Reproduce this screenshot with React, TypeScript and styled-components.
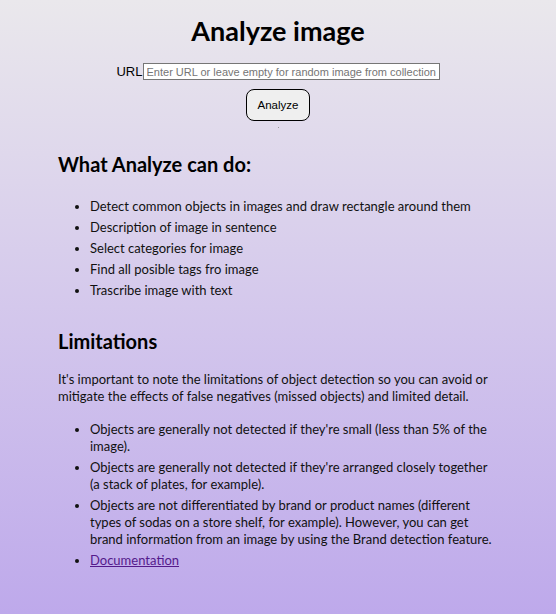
import React from "react";
import styled, { createGlobalStyle } from "styled-components";

const Global = createGlobalStyle`
  html, body { margin: 0; padding: 0; }
  body {
    min-height: 100vh;
    background: linear-gradient(180deg, #eae8ec 0%, #d4c8ec 50%, #bea9eb 100%);
    font-family: Lato, "Noto Sans", sans-serif;
    color: #111;
  }
`;

const Page = styled.main`
  width: 440px;
  margin: 0 auto;
  padding-top: 14px;
  padding-bottom: 20px;
`;

const Title = styled.h1`
  margin: 0;
  text-align: center;
  font-size: 27px;
  line-height: 34px;
  font-weight: 700;
  color: #000;
`;

const Form = styled.form`
  display: flex;
  flex-direction: column;
  align-items: center;
  margin-top: 15px;
`;

const UrlRow = styled.div`
  display: flex;
  align-items: center;
  font-family: "Liberation Sans", Arial, sans-serif;
  font-size: 13px;
  color: #000;
`;

const UrlInput = styled.input`
  box-sizing: border-box;
  width: 297px;
  height: 17px;
  margin: 0;
  padding: 0 3px;
  border: 1px solid #767676;
  background: #fff;
  font-family: "Liberation Sans", Arial, sans-serif;
  font-size: 11px;
  &::placeholder { color: #757575; }
`;

const Button = styled.button`
  margin-top: 9px;
  width: 64px;
  height: 32px;
  border: 1px solid #000;
  border-radius: 8px;
  background: #efefef;
  font-family: "Liberation Sans", Arial, sans-serif;
  font-size: 11.5px;
  color: #000;
`;

const Dot = styled.span`
  display: block;
  width: 1px;
  height: 1px;
  margin-top: 6px;
  background: #999;
`;

const Heading = styled.h2<{ $top: number }>`
  margin: ${(p) => p.$top}px 0 0;
  font-size: 20px;
  line-height: 26px;
  font-weight: 700;
  color: #000;
`;

const List = styled.ul<{ $top: number }>`
  margin: ${(p) => p.$top}px 0 0;
  padding-left: 32px;
  font-size: 13px;
  line-height: 17px;
`;

const Item = styled.li`
  margin-bottom: 4px;
`;

const Para = styled.p`
  margin: 17px 0 0;
  font-size: 13px;
  line-height: 17px;
`;

const Link = styled.a`
  color: #551a8b;
`;

export default function App() {
  return (
    <>
      <Global />
      <Page>
        <Title>Analyze image</Title>
        <Form onSubmit={(e) => e.preventDefault()}>
          <UrlRow>
            <span>URL</span>
            <UrlInput placeholder="Enter URL or leave empty for random image from collection" />
          </UrlRow>
          <Button type="submit">Analyze</Button>
          <Dot />
        </Form>
        <Heading $top={23}>What Analyze can do:</Heading>
        <List $top={21}>
          <Item>Detect common objects in images and draw rectangle around them</Item>
          <Item>Description of image in sentence</Item>
          <Item>Select categories for image</Item>
          <Item>Find all posible tags fro image</Item>
          <Item>Trascribe image with text</Item>
        </List>
        <Heading $top={29}>Limitations</Heading>
        <Para>
          It's important to note the limitations of object detection so you can avoid or
          mitigate the effects of false negatives (missed objects) and limited detail.
        </Para>
        <List $top={16}>
          <Item>Objects are generally not detected if they're small (less than 5% of the image).</Item>
          <Item>
            Objects are generally not detected if they're arranged closely together (a stack of
            plates, for example).
          </Item>
          <Item>
            Objects are not differentiated by brand or product names (different types of sodas on
            a store shelf, for example). However, you can get brand information from an image by
            using the Brand detection feature.
          </Item>
          <Item>
            <Link href="#">Documentation</Link>
          </Item>
        </List>
      </Page>
    </>
  );
}
